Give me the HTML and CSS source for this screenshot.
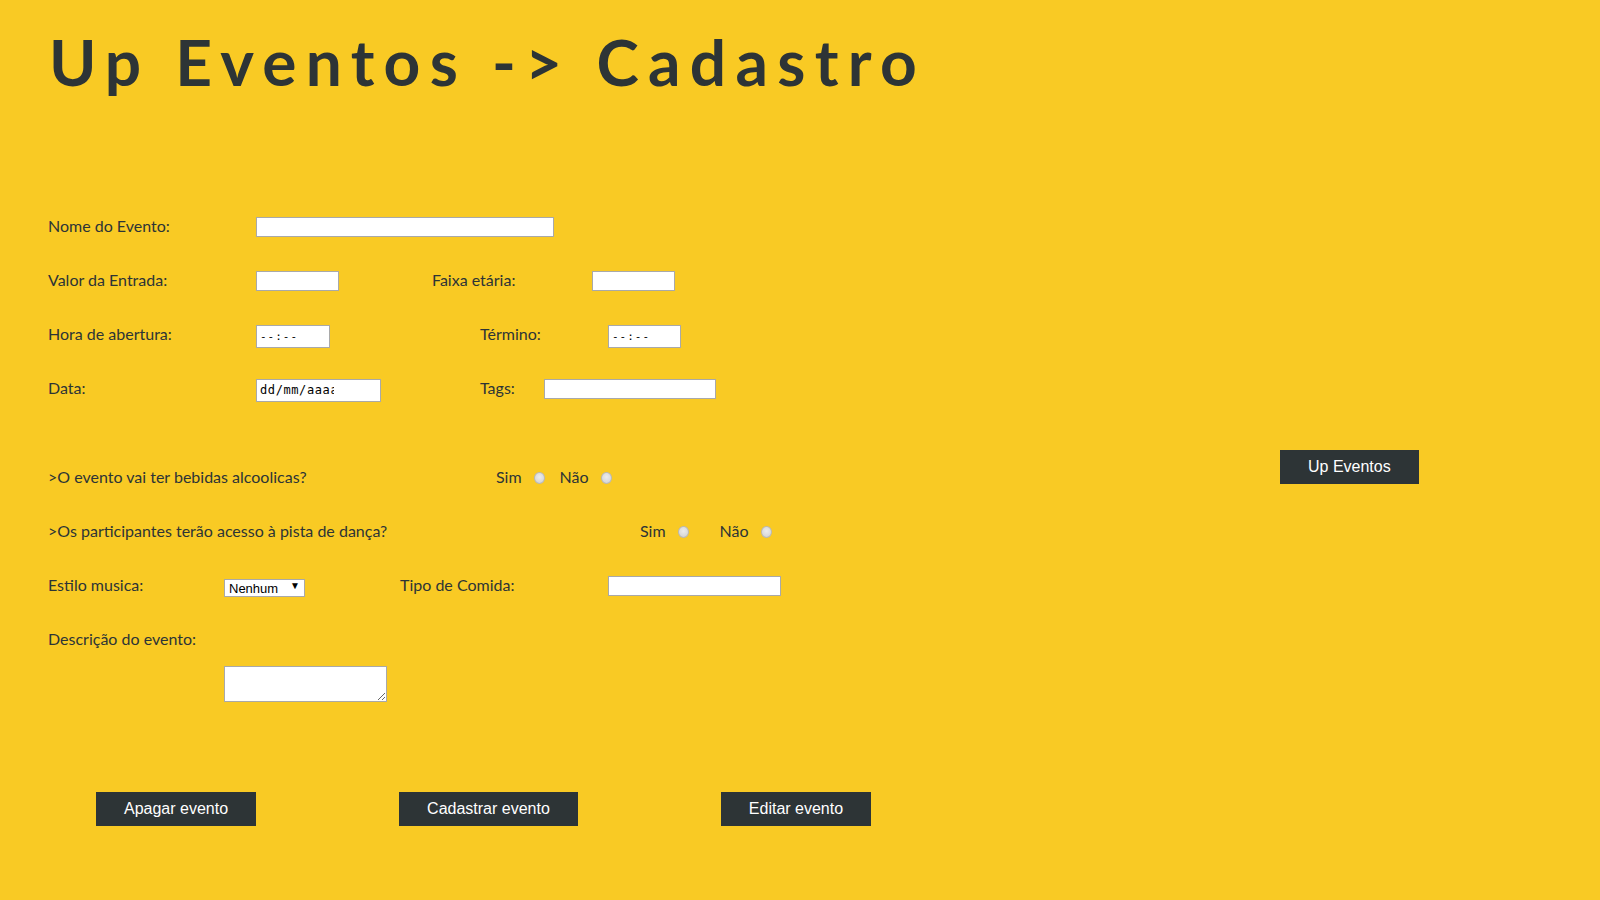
FILE: index.html
```html
<!DOCTYPE html>
<html lang="pt-BR">
<head>
<meta charset="utf-8">
<title>Up Eventos -> Cadastro</title>
<link rel="stylesheet" href="styles.css">
</head>
<body>
<h1 class="title">Up Eventos -&gt; Cadastro</h1>
<div class="main">
  <form class="form">
    <div class="row">
      <label class="lbl w208">Nome do Evento:</label>
      <input class="field w298" type="text">
    </div>
    <div class="row">
      <label class="lbl w208">Valor da Entrada:</label>
      <input class="field w83" type="text">
      <label class="lbl ml93 w160">Faixa etária:</label>
      <input class="field w83" type="text">
    </div>
    <div class="row">
      <label class="lbl w208">Hora de abertura:</label>
      <input class="field mono w74 h23" type="text" value="--:--" readonly>
      <label class="lbl ml150 w128">Término:</label>
      <input class="field mono w73 h23" type="text" value="--:--" readonly>
    </div>
    <div class="row">
      <label class="lbl w208">Data:</label>
      <input class="field mono date w125 h23" type="text" value="dd/mm/aaaa" readonly>
      <label class="lbl ml99 w64">Tags:</label>
      <input class="field w172" type="text">
    </div>
    <div class="row first-q">
      <span class="lbl w448">&gt;O evento vai ter bebidas alcoolicas?</span>
      <span class="opt">Sim</span><input class="radio" type="radio" name="beb">
      <span class="opt ml15">Não</span><input class="radio" type="radio" name="beb">
    </div>
    <div class="row">
      <span class="lbl w592">&gt;Os participantes terão acesso à pista de dança?</span>
      <span class="opt">Sim</span><input class="radio" type="radio" name="pista">
      <span class="opt ml31">Não</span><input class="radio" type="radio" name="pista">
    </div>
    <div class="row">
      <label class="lbl w176">Estilo musica:</label>
      <span class="select-wrap">
        <select class="select"><option>Nenhum</option></select>
        <span class="arrow">▼</span>
      </span>
      <label class="lbl ml95 w208">Tipo de Comida:</label>
      <input class="field w173" type="text">
    </div>
    <div class="row desc-row">
      <label class="lbl">Descrição do evento:</label>
    </div>
    <div class="ta-row">
      <textarea class="textarea"></textarea>
    </div>
    <div class="actions">
      <button type="button" class="btn">Apagar evento</button>
      <button type="button" class="btn">Cadastrar evento</button>
      <button type="button" class="btn">Editar evento</button>
    </div>
  </form>
  <aside class="side">
    <button type="button" class="btn">Up Eventos</button>
  </aside>
</div>
</body>
</html>
```

FILE: styles.css
```css
html, body {
  margin: 0;
  padding: 0;
  background: #f9ca24;
}
body {
  width: 1600px;
  height: 900px;
  overflow: hidden;
  font-family: Lato, "Open Sans", sans-serif;
  color: #2d3436;
}
.title {
  margin: 24px 0 0 49px;
  font-family: Lato, sans-serif;
  font-weight: 700;
  font-size: 64px;
  line-height: 1.2;
  letter-spacing: 9.3px;
  color: #2d3436;
  white-space: nowrap;
}
.main {
  display: flex;
  margin-top: 99px;
}
.form {
  width: 1280px;
  padding-left: 48px;
  box-sizing: border-box;
  display: flex;
  flex-direction: column;
}
.side {
  padding-top: 250px;
}
.row {
  display: flex;
  align-items: center;
  height: 54px;
}
.first-q {
  margin-top: 35px;
}
.desc-row {
  height: 53px;
}
.lbl {
  font-size: 16px;
  color: #2d3436;
  white-space: nowrap;
  flex: none;
  position: relative;
  top: -1px;
}
.w64 { width: 64px; }
.w128 { width: 128px; }
.w160 { width: 160px; }
.w176 { width: 176px; }
.w208 { width: 208px; }
.w448 { width: 448px; }
.w592 { width: 592px; }
.ml93 { margin-left: 93px; }
.ml95 { margin-left: 95px; }
.ml99 { margin-left: 99px; }
.ml150 { margin-left: 150px; }
.ml15 { margin-left: 15px; }
.ml31 { margin-left: 31px; }

.field {
  box-sizing: border-box;
  height: 20px;
  margin: 0;
  padding: 0 4px;
  border: 1px solid #a9a9a9;
  background: #fff;
  font-family: Lato, sans-serif;
  font-size: 13px;
  color: #000;
  outline: none;
}
.h23 { height: 23px; margin-top: 3px; }
.mono {
  font-family: "DejaVu Sans Mono", monospace;
  font-size: 11px;
  letter-spacing: 1px;
  padding: 0 3px;
}
.date {
  font-size: 12px;
  letter-spacing: 0.6px;
  padding: 0 46px 0 3px;
}
.w73 { width: 73px; }
.w74 { width: 74px; }
.w83 { width: 83px; }
.w125 { width: 125px; }
.w172 { width: 172px; }
.w173 { width: 173px; }
.w298 { width: 298px; }

.opt {
  font-size: 16px;
  color: #2d3436;
  position: relative;
  top: -1px;
}
.radio {
  appearance: none;
  -webkit-appearance: none;
  width: 11px;
  height: 12px;
  margin: 0 0 0 12px;
  border: 1px solid #b8b8b8;
  border-radius: 50%;
  background: radial-gradient(circle at 50% 40%, #ececec, #cfcfcf);
  box-sizing: border-box;
}

.select-wrap {
  position: relative;
  display: inline-block;
  width: 81px;
  height: 18px;
  flex: none;
}
.select {
  appearance: none;
  -webkit-appearance: none;
  width: 81px;
  height: 18px;
  margin: 0;
  padding: 0 0 0 4px;
  border: 1px solid #a9a9a9;
  border-radius: 0;
  background: #fff;
  font-family: "Liberation Sans", Arial, sans-serif;
  font-size: 13px;
  color: #000;
  box-sizing: border-box;
}
.arrow {
  position: absolute;
  right: 5px;
  top: 2px;
  font-size: 10px;
  line-height: 12px;
  color: #000;
  pointer-events: none;
}

.ta-row {
  display: flex;
  padding-left: 176px;
}
.textarea {
  width: 163px;
  height: 36px;
  margin: 0;
  padding: 2px;
  box-sizing: border-box;
  border: 1px solid #a9a9a9;
  background: #fff;
  resize: both;
}

.actions {
  display: flex;
  gap: 143px;
  margin-top: 90px;
  padding-left: 48px;
}
.btn {
  height: 34px;
  padding: 0 28px;
  margin: 0;
  border: none;
  border-radius: 0;
  background: #2d3436;
  color: #fff;
  font-family: "Liberation Sans", Arial, sans-serif;
  font-size: 16px;
  cursor: pointer;
}
```
